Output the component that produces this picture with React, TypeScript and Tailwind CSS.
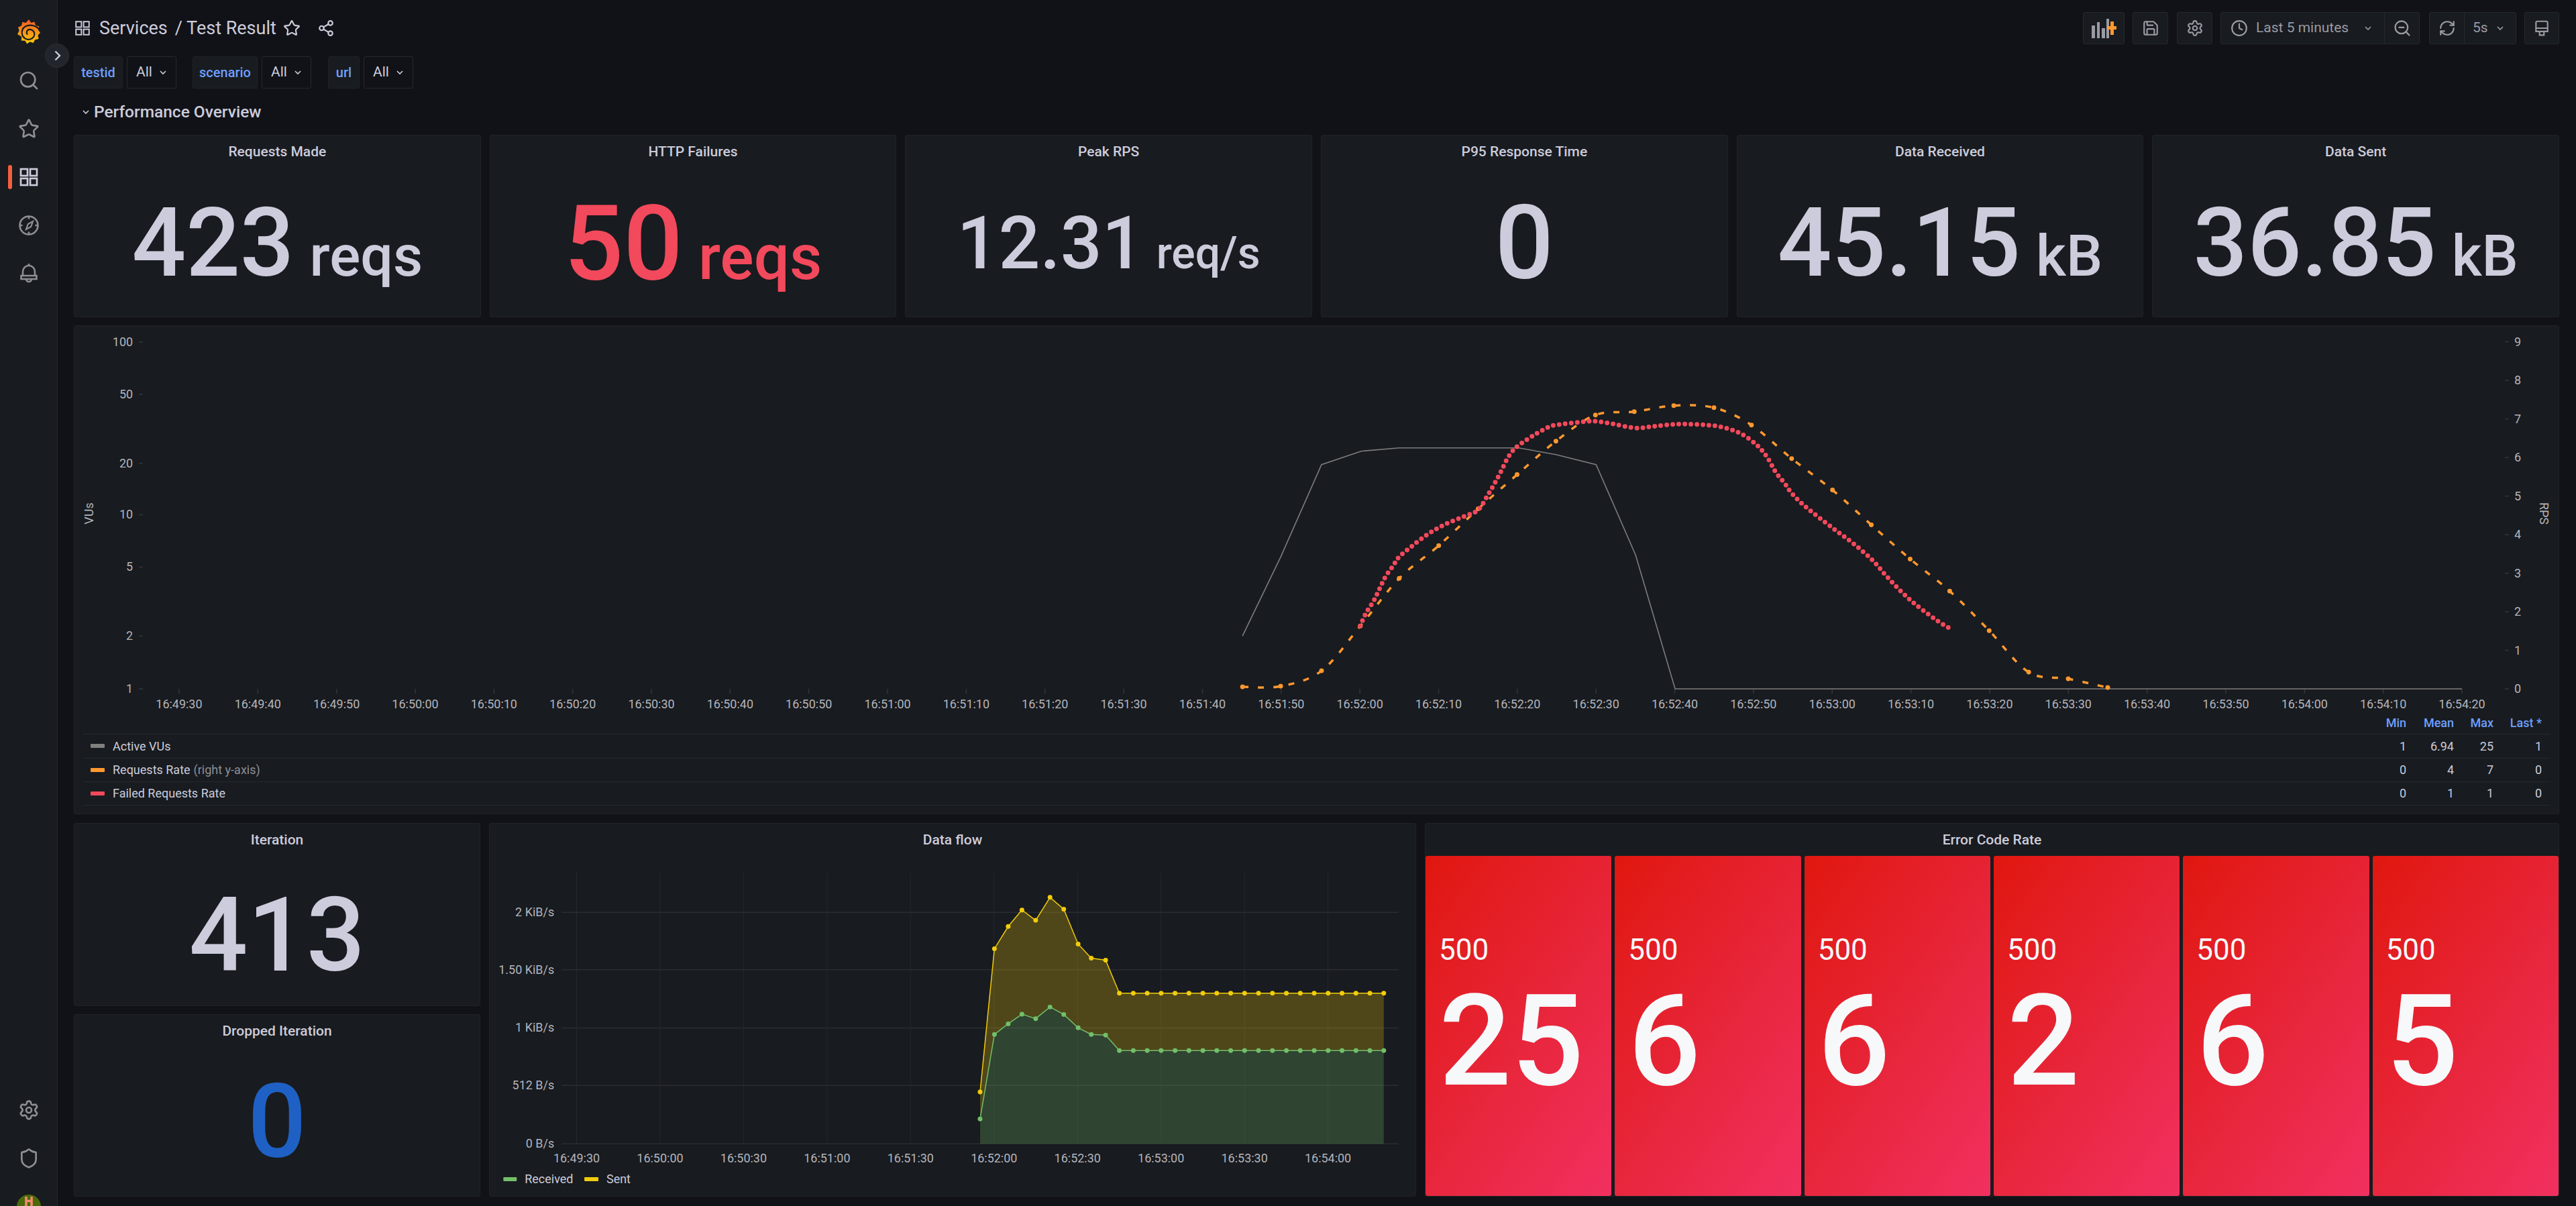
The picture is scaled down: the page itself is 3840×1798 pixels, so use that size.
import { Clock, RefreshCw, Save, Search, Settings, Share2, Shield, Star, ZoomOut } from "lucide-react";

const font = "font-['Roboto','Liberation_Sans',sans-serif]";

function Apps({ className, width = 2 }: { className?: string; width?: number }) {
  return (
    <svg viewBox="0 0 24 24" fill="none" stroke="currentColor" strokeWidth={width} className={className}>
      <rect x="3" y="3" width="7.5" height="7.5" />
      <rect x="13.5" y="3" width="7.5" height="7.5" />
      <rect x="3" y="13.5" width="7.5" height="7.5" />
      <rect x="13.5" y="13.5" width="7.5" height="7.5" />
    </svg>
  );
}

function Logo() {
  return (
    <svg viewBox="0 0 34 38" className="w-[34px] h-[38px]">
      <defs>
        <linearGradient id="grafana" x1="0" y1="0" x2="0" y2="1">
          <stop offset="0" stopColor="#f05a28" />
          <stop offset="1" stopColor="#fbca0a" />
        </linearGradient>
      </defs>
      <path
        fill="url(#grafana)"
        d="M17 0l3.4 5 5-1.4 1.6 5.2 5.4 1.6-1.4 5.4 3 4-3.4 3.6 1 5.6-5.4 1.2-2.6 4.8-4.8-1.8-4.6 3-2.8-4.4-5.6-.4.4-5.6L0 22l2.6-5.2L1 11.4l5-2 1.4-5.6 5 1.2z"
      />
      <path
        fill="none"
        stroke="#181b1f"
        strokeWidth="2.2"
        d="M33 15C28 9 20 7.5 14 9.5C8 11.5 5.5 17 7 22.5C8.5 28 14 31 19 29.5C24 28 26.5 23.5 25 19.5C23.5 15.5 19 14 16 15.5C13.5 17 13 20.5 15 22.5"
      />
    </svg>
  );
}

function CompassIcon() {
  return (
    <svg viewBox="0 0 32 32" className="w-[32px] h-[32px]" fill="none" stroke="currentColor" strokeWidth="2.6">
      <circle cx="16" cy="16" r="13.5" />
      <path d="M16 2.5v4M16 25.5v4M2.5 16h4M25.5 16h4" />
      <path d="M22 10l-2.8 8-7.2 4 2.8-8z" strokeWidth="2.2" />
    </svg>
  );
}

function BellIcon() {
  return (
    <svg viewBox="0 0 32 32" className="w-[32px] h-[32px]" fill="none" stroke="currentColor" strokeWidth="2.6">
      <path d="M16 1v4M7 19v-6a9 9 0 0118 0v6" />
      <path d="M4.5 19h23v5h-23zM12 24a4 4 0 008 0" />
    </svg>
  );
}

function NavIcon({ children, active }: { children: React.ReactNode; active?: boolean }) {
  return (
    <div className="relative flex items-center justify-center h-[72px] text-[#8e8e96]">
      {active && <div className="absolute left-[12px] top-[18px] w-[6px] h-[36px] rounded-full bg-[#f55f3e]" />}
      {children}
    </div>
  );
}

function Sidebar() {
  return (
    <div className="relative flex flex-col shrink-0 w-[86px] h-full bg-[#181b1f] border-r border-[#24272b]">
      <div className="flex justify-center pt-[29px] h-[84px]">
        <Logo />
      </div>
      <div className="absolute left-[67px] top-[65px] w-[36px] h-[36px] rounded-full bg-[#22252b] border border-[#2c2f35] flex items-center justify-center z-10">
        <svg viewBox="0 0 24 24" className="w-[24px] h-[24px]" fill="none" stroke="#ccccdc" strokeWidth="2.4">
          <path d="M9.5 5.5l6.5 6.5-6.5 6.5" />
        </svg>
      </div>
      <NavIcon><Search className="w-[32px] h-[32px]" strokeWidth={2} /></NavIcon>
      <NavIcon><Star className="w-[32px] h-[32px]" strokeWidth={2} /></NavIcon>
      <NavIcon active><Apps className="w-[32px] h-[32px] text-[#ccccdc]" /></NavIcon>
      <NavIcon><CompassIcon /></NavIcon>
      <NavIcon><BellIcon /></NavIcon>
      <div className="flex-1" />
      <NavIcon><Settings className="w-[32px] h-[32px]" strokeWidth={2} /></NavIcon>
      <NavIcon><Shield className="w-[32px] h-[32px]" strokeWidth={2} /></NavIcon>
      <div className="flex justify-center h-[17px] mt-[18px] overflow-hidden">
        <div className="w-[36px] h-[36px] rounded-full bg-[#4a6a0a] flex justify-center pt-[3px]">
          <svg viewBox="0 0 12 12" className="w-[14px] h-[14px]">
            <path fill="#f58a70" d="M1 0h3v4h4V0h3v12H8V7H4v5H1z" />
          </svg>
        </div>
      </div>
    </div>
  );
}

function Btn({ children, className }: { children: React.ReactNode; className?: string }) {
  return (
    <div className={`flex items-center justify-center h-[48px] bg-[#181b1f] border border-[#25282c] rounded-[3px] text-[#9a9aa4] ${className ?? ""}`}>
      {children}
    </div>
  );
}

function Caret({ className }: { className?: string }) {
  return (
    <svg viewBox="0 0 12 12" className={`w-[12px] h-[12px] ${className ?? ""}`} fill="none" stroke="currentColor" strokeWidth="1.6">
      <path d="M2 4l4 4 4-4" />
    </svg>
  );
}

function Header() {
  return (
    <div className="flex items-center justify-between h-[48px]">
      <div className="flex items-center text-[#ccccdc]">
        <Apps className="w-[26px] h-[26px] mr-[12px]" width={1.8} />
        <span className="text-[27px]">Services</span>
        <span className="text-[27px] ml-[11px]">/ Test Result</span>
        <Star className="w-[26px] h-[26px] ml-[10px]" strokeWidth={2} />
        <Share2 className="w-[26px] h-[26px] ml-[25px]" strokeWidth={2} />
      </div>
      <div className="flex items-center text-[21px]">
        <Btn className="w-[62px]">
          <svg viewBox="0 0 38 30" className="w-[38px] h-[30px]">
            <path fill="#9a9aa4" d="M1 11h5v19H1zM9 6h4v24H9zM16 15h5v15h-5zM23 1h4v29h-4z" />
            <path fill="#ff9830" d="M29 5h5v7h4v5h-4v8h-5v-8h-5v-5h5z" />
          </svg>
        </Btn>
        <Btn className="w-[53px] ml-[12px]"><Save className="w-[26px] h-[26px]" strokeWidth={2} /></Btn>
        <Btn className="w-[53px] ml-[13px]"><Settings className="w-[26px] h-[26px]" strokeWidth={2} /></Btn>
        <Btn className="w-[297px] ml-[12px] justify-start">
          <div className="flex items-center flex-1 pl-[14px]">
            <Clock className="w-[26px] h-[26px]" strokeWidth={2} />
            <span className="ml-[12px] flex-1">Last 5 minutes</span>
            <Caret className="mr-[18px]" />
          </div>
          <div className="flex items-center justify-center w-[52px] h-full border-l border-[#25282c]">
            <ZoomOut className="w-[28px] h-[28px]" strokeWidth={2} />
          </div>
        </Btn>
        <Btn className="w-[130px] ml-[14px] justify-start">
          <div className="flex items-center justify-center w-[52px] h-full border-r border-[#25282c]">
            <RefreshCw className="w-[26px] h-[26px]" strokeWidth={2} />
          </div>
          <span className="ml-[12px]">5s</span>
          <Caret className="ml-[12px]" />
        </Btn>
        <Btn className="w-[52px] ml-[12px]">
          <svg viewBox="0 0 24 24" className="w-[26px] h-[26px]" fill="none" stroke="currentColor" strokeWidth="2">
            <path d="M6 2.5h12a2 2 0 012 2v12H4v-12a2 2 0 012-2zM4 12h16M9 17v4.5h6V17" />
          </svg>
        </Btn>
      </div>
    </div>
  );
}

function Filter({ label, width, ml }: { label: string; width: string; ml: string }) {
  return (
    <div className={`flex items-center gap-[6px] ${ml}`}>
      <div className={`flex items-center justify-center h-[48px] bg-[#181b1f] border border-[#202226] rounded-[3px] text-[#6e9fff] font-medium ${width}`}>
        {label}
      </div>
      <div className="flex items-center justify-center gap-[10px] w-[74px] h-[48px] border border-[#25282c] rounded-[3px] text-[#ccccdc]">
        <span className="text-[21px]">All</span>
        <Caret />
      </div>
    </div>
  );
}

function Panel({ title, children, className }: { title?: string; children: React.ReactNode; className?: string }) {
  return (
    <div className={`flex flex-col bg-[#181b1f] border border-[#202226] rounded-[3px] overflow-hidden ${className ?? ""}`}>
      {title && (
        <div className="flex items-center justify-center h-[50px] shrink-0 text-[21px] font-medium text-[#ccccdc]">{title}</div>
      )}
      {children}
    </div>
  );
}

function StatPanel({ title, value, unit, big, small, gap, color }: { title: string; value: string; unit?: string; big: string; small?: string; gap?: string; color: string }) {
  return (
    <Panel title={title}>
      <div className={`flex flex-1 items-baseline justify-center pt-[22px] font-medium leading-[178px] ${color}`}>
        <span className={big}>{value}</span>
        {unit && <span className={`${gap ?? "ml-[23px]"} ${small ?? ""}`}>{unit}</span>}
      </div>
    </Panel>
  );
}

// catmull-rom through the points, close enough to grafana's smoothed lines
function smooth(p: number[][]) {
  let d = `M${p[0][0]} ${p[0][1]}`;
  for (let i = 0; i < p.length - 1; i++) {
    const a = p[Math.max(i - 1, 0)];
    const b = p[i];
    const c = p[i + 1];
    const e = p[Math.min(i + 2, p.length - 1)];
    d += `C${b[0] + (c[0] - a[0]) / 6} ${b[1] + (c[1] - a[1]) / 6} ${c[0] - (e[0] - b[0]) / 6} ${c[1] - (e[1] - b[1]) / 6} ${c[0]} ${c[1]}`;
  }
  return d;
}

const vus = [[1852, 948], [1909, 830], [1970, 692], [2029, 672], [2086, 667], [2264, 667], [2320, 677], [2380, 692], [2439, 827], [2498, 1027], [3673, 1027]];

const rps = [[1852, 1024], [1909, 1023], [1970, 1000], [2028, 933], [2086, 862], [2145, 813], [2204, 758], [2262, 707], [2320, 657], [2379, 618], [2437, 613], [2496, 604], [2556, 607], [2612, 633], [2672, 683], [2733, 730], [2791, 782], [2849, 833], [2908, 881], [2967, 940], [3026, 1002], [3085, 1012], [3144, 1025]];

// zoomed crop coordinates of the failed rate curve, mapped back to the page
const failed = [[255, 1150], [265, 1090], [277, 1040], [287, 985], [297, 930], [310, 880], [320, 840], [340, 795], [367, 740], [396, 695], [427, 660], [452, 630], [468, 565], [480, 510], [490, 460], [500, 405], [510, 365], [520, 340], [545, 295], [570, 258], [585, 248], [625, 235], [650, 232], [680, 245], [715, 262], [745, 255], [785, 245], [830, 248], [860, 258], [890, 285], [917, 335], [935, 390], [950, 460], [965, 510], [977, 555], [1000, 615], [1045, 710], [1080, 780], [1112, 855], [1135, 925], [1160, 995], [1185, 1055], [1220, 1125], [1241, 1160]].map(([x, y]) => [1800 + x / 1.12, 550 + y / 3]);

const leftTicks = [["100", 509], ["50", 587], ["20", 690], ["10", 767], ["5", 845], ["2", 948], ["1", 1027]] as const;
const rightTicks = ["0", "1", "2", "3", "4", "5", "6", "7", "8", "9"];

function timeLabel(i: number) {
  const total = 16 * 3600 + 49 * 60 + 30 + i * 10;
  const h = Math.floor(total / 3600);
  const m = Math.floor((total % 3600) / 60);
  const s = total % 60;
  return `${h}:${String(m).padStart(2, "0")}:${String(s).padStart(2, "0")}`;
}

function MainChart() {
  return (
    <svg viewBox="110 485 3705 575" className="w-[3703px] h-[574px] shrink-0 text-[18px]" fill="#b4b4bc">
      {leftTicks.map(([t, y]) => (
        <g key={t}>
          <line x1="204" x2="210" y1={y} y2={y} stroke="#33363b" strokeWidth="1.5" />
          <text x="195" y={y + 6} textAnchor="end">{t}</text>
        </g>
      ))}
      {rightTicks.map((t, i) => {
        const y = 1027 - i * 57.6;
        return (
          <g key={t}>
            <line x1="3737" x2="3743" y1={y} y2={y} stroke="#33363b" strokeWidth="1.5" />
            <text x="3751" y={y + 6}>{t}</text>
          </g>
        );
      })}
      {Array.from({ length: 30 }, (_, i) => {
        const x = 264 + i * 117.55;
        return (
          <g key={i}>
            <line x1={x} x2={x} y1="1027" y2="1034" stroke="#33363b" strokeWidth="1.5" />
            <text x={x} y="1056" textAnchor="middle">{timeLabel(i)}</text>
          </g>
        );
      })}
      <text transform="translate(136 765) rotate(-90)" textAnchor="middle">VUs</text>
      <text transform="translate(3789 765) rotate(90)" textAnchor="middle">RPS</text>
      <polyline points={vus.map((p) => p.join(",")).join(" ")} fill="none" stroke="#7d7d7d" strokeWidth="1.6" />
      <path d={smooth(rps)} fill="none" stroke="#ff9830" strokeWidth="3.5" strokeDasharray="9 14" />
      {rps.map(([x, y]) => (
        <circle key={x} cx={x} cy={y} r="3.5" fill="#ff9830" />
      ))}
      <path d={smooth(failed)} fill="none" stroke="#f2495c" strokeWidth="7" strokeLinecap="round" strokeDasharray="0 9" />
    </svg>
  );
}

const legend = [
  { name: "Active VUs", color: "bg-[#808080]", vals: ["1", "6.94", "25", "1"] },
  { name: "Requests Rate", note: "(right y-axis)", color: "bg-[#ff9830]", vals: ["0", "4", "7", "0"] },
  { name: "Failed Requests Rate", color: "bg-[#f2495c]", vals: ["0", "1", "1", "0"] },
];

function Legend() {
  return (
    <div className="mx-[12px] text-[18px] text-[#ccccdc]">
      <div className="flex items-center justify-end h-[34px] font-medium text-[#6e9fff]">
        <span className="w-[70px] text-right">Min</span>
        <span className="w-[71px] text-right">Mean</span>
        <span className="w-[59px] text-right">Max</span>
        <span className="w-[72px] text-right mr-[13px]">Last *</span>
      </div>
      {legend.map((r) => (
        <div key={r.name} className="flex items-center h-[35.5px] border-t border-[#26292d] last:border-b">
          <div className={`w-[21px] h-[6px] ml-[12px] mr-[12px] rounded-[1px] ${r.color}`} />
          <span>{r.name}</span>
          {r.note && <span className="ml-[5px] text-[#8e8e96]">{r.note}</span>}
          <div className="flex-1" />
          <span className="w-[70px] text-right">{r.vals[0]}</span>
          <span className="w-[71px] text-right">{r.vals[1]}</span>
          <span className="w-[59px] text-right">{r.vals[2]}</span>
          <span className="w-[72px] text-right mr-[13px]">{r.vals[3]}</span>
        </div>
      ))}
    </div>
  );
}

const fx = (x: number) => 720 + x / 1.12;
const fy = (y: number) => 1220 + y / 2.71;
const flat = Array.from({ length: 19 }, (_, i) => 1086.3 + i * 23.28);
const sent = [[830, 1105], [854, 525], [877, 435], [900, 368], [923, 410], [947, 317], [970, 365], [994, 506], [1016, 563], [1040, 571], [1063, 705], ...flat.map((x) => [x, 705])].map(([x, y]) => [fx(x), fy(y)]);
const received = [[830, 1214], [854, 872], [877, 829], [900, 790], [923, 808], [947, 761], [970, 791], [994, 845], [1016, 872], [1040, 875], [1063, 937], ...flat.map((x) => [x, 937])].map(([x, y]) => [fx(x), fy(y)]);
const line = (p: number[][]) => p.map((q) => q.join(",")).join(" ");

function FlowChart() {
  const left = received[0][0];
  const right = received[received.length - 1][0];
  const base = 1705;
  return (
    <svg viewBox="729 1277 1382 506" className="w-[1380px] h-[505px] text-[18px]" fill="#b4b4bc">
      {[["2 KiB/s", 1359.5], ["1.50 KiB/s", 1445], ["1 KiB/s", 1532], ["512 B/s", 1618], ["0 B/s", 1705]].map(([t, y]) => (
        <g key={t}>
          <line x1="836" x2="2086" y1={y} y2={y} stroke="#2a2d31" strokeWidth="1.5" />
          <text x="825" y={Number(y) + 6} textAnchor="end">{t}</text>
        </g>
      ))}
      {["16:49:30", "16:50:00", "16:50:30", "16:51:00", "16:51:30", "16:52:00", "16:52:30", "16:53:00", "16:53:30", "16:54:00"].map((t, i) => {
        const x = 858.4 + i * 124.7;
        return (
          <g key={t}>
            <line x1={x} x2={x} y1="1300" y2="1705" stroke="#25282c" strokeWidth="1" />
            <text x={x} y="1733" textAnchor="middle">{t}</text>
          </g>
        );
      })}
      <polygon points={`${left},${base} ${line(received)} ${right},${base}`} fill="#73bf69" fillOpacity="0.25" />
      <polygon points={`${line(received)} ${line(sent.slice().reverse())}`} fill="#f2cc0c" fillOpacity="0.25" />
      <polyline points={line(sent)} fill="none" stroke="#f2cc0c" strokeWidth="1.5" />
      <polyline points={line(received)} fill="none" stroke="#73bf69" strokeWidth="1.5" />
      {sent.map(([x, y]) => <circle key={x} cx={x} cy={y} r="3.5" fill="#f2cc0c" />)}
      {received.map(([x, y]) => <circle key={x} cx={x} cy={y} r="3.5" fill="#73bf69" />)}
      <rect x="749" y="1755" width="20" height="6" rx="1" fill="#73bf69" />
      <text x="781" y="1764" fill="#ccccdc">Received</text>
      <rect x="870" y="1755" width="21" height="6" rx="1" fill="#f2cc0c" />
      <text x="903" y="1764" fill="#ccccdc">Sent</text>
    </svg>
  );
}

const errors = ["25", "6", "6", "2", "6", "5"];

function ErrorTile({ value }: { value: string }) {
  return (
    <div className="flex flex-col justify-center flex-1 pl-[20px] pb-[16px] rounded-[3px] bg-[linear-gradient(125deg,#e0170f,#e8263c_55%,#f23060)] text-[#f7f8fa]">
      <div className="text-[44px] leading-[52px] -mt-[2px]">500</div>
      <div className="text-[190px] leading-[200px] font-medium mt-[10px]">{value}</div>
    </div>
  );
}

export default function App() {
  return (
    <div className={`flex w-[3840px] h-[1798px] overflow-hidden bg-[#111217] text-[#ccccdc] ${font}`}>
      <Sidebar />
      <div className="flex flex-col flex-1 pt-[18px] pl-[24px] pr-[25px]">
        <Header />
        <div className="flex items-center mt-[18px] text-[20px]">
          <Filter label="testid" width="w-[73px]" ml="" />
          <Filter label="scenario" width="w-[97px]" ml="ml-[24px]" />
          <Filter label="url" width="w-[47px]" ml="ml-[25px]" />
        </div>
        <div className="flex items-center h-[69px] pl-[12px] pt-[1px] text-[#ccccdc]">
          <Caret />
          <span className="ml-[6px] text-[24.5px] font-medium">Performance Overview</span>
        </div>
        <div className="grid grid-cols-6 gap-[13px] h-[272px]">
          <StatPanel title="Requests Made" value="423" unit="reqs" big="text-[142px]" small="text-[86px]" color="text-[#ccccdc]" />
          <StatPanel title="HTTP Failures" value="50" unit="reqs" big="text-[156px]" small="text-[94px]" color="text-[#f2495c]" />
          <StatPanel title="Peak RPS" value="12.31" unit="req/s" big="text-[109px]" small="text-[66px]" gap="ml-[19px]" color="text-[#ccccdc]" />
          <StatPanel title="P95 Response Time" value="0" big="text-[154px]" color="text-[#ccccdc]" />
          <StatPanel title="Data Received" value="45.15" unit="kB" big="text-[142px]" small="text-[86px]" color="text-[#ccccdc]" />
          <StatPanel title="Data Sent" value="36.85" unit="kB" big="text-[142px]" small="text-[86px]" color="text-[#ccccdc]" />
        </div>
        <Panel className="h-[729px] mt-[12px]">
          <MainChart />
          <Legend />
        </Panel>
        <div className="flex gap-[13px] h-[557px] mt-[13px]">
          <div className="flex flex-col gap-[12px] w-[606px] shrink-0">
            <Panel title="Iteration" className="flex-1">
              <div className="flex flex-1 items-center justify-center pt-[14px] text-[154px] leading-none font-medium text-[#ccccdc]">413</div>
            </Panel>
            <Panel title="Dropped Iteration" className="flex-1">
              <div className="flex flex-1 items-center justify-center text-[154px] leading-none font-medium text-[#1f60c4]">0</div>
            </Panel>
          </div>
          <Panel title="Data flow" className="w-[1382px] shrink-0">
            <FlowChart />
          </Panel>
          <Panel title="Error Code Rate" className="flex-1">
            <div className="flex flex-1 gap-[5px] -mt-[2px]">
              {errors.map((v, i) => (
                <ErrorTile key={i} value={v} />
              ))}
            </div>
          </Panel>
        </div>
      </div>
    </div>
  );
}
